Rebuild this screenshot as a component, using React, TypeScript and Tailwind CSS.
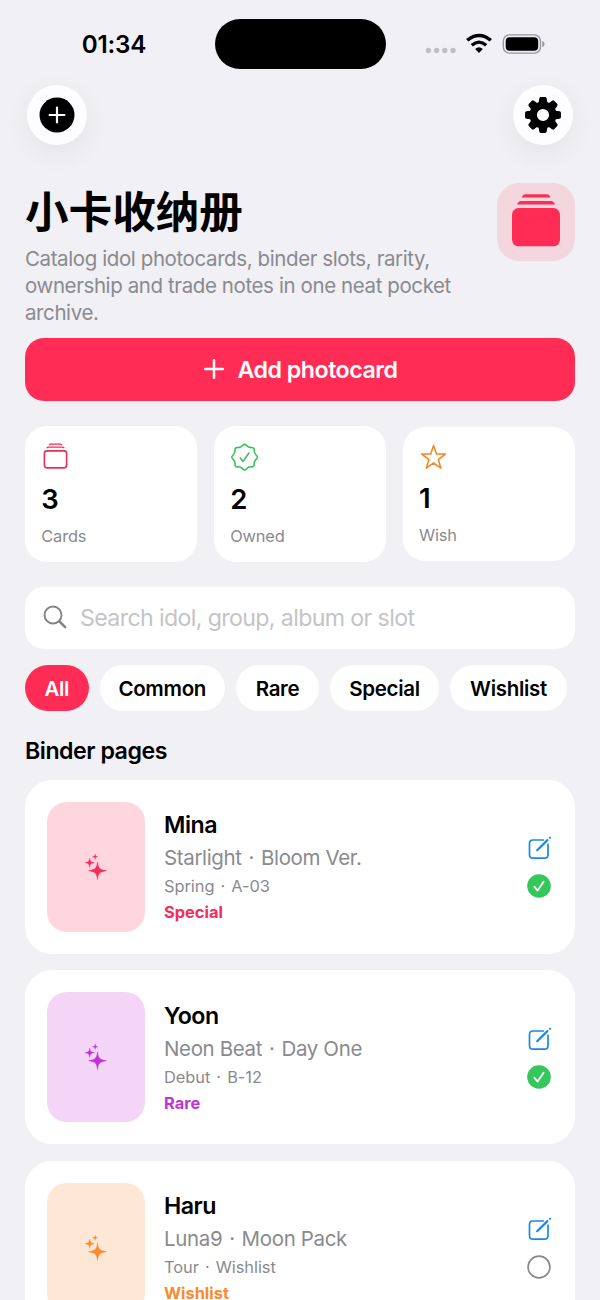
import React from "react";

type CardTone = "pink" | "purple" | "orange";

interface Photocard {
  name: string;
  group: string[];
  slot: string[];
  rarity: string;
  tone: CardTone;
  owned: boolean;
}

const cards: Photocard[] = [
  { name: "Mina", group: ["Starlight", "Bloom Ver."], slot: ["Spring", "A-03"], rarity: "Special", tone: "pink", owned: true },
  { name: "Yoon", group: ["Neon Beat", "Day One"], slot: ["Debut", "B-12"], rarity: "Rare", tone: "purple", owned: true },
  { name: "Haru", group: ["Luna9", "Moon Pack"], slot: ["Tour", "Wishlist"], rarity: "Wishlist", tone: "orange", owned: false },
];

const tones: Record<CardTone, { bg: string; text: string }> = {
  pink: { bg: "bg-[#ffd5de]", text: "text-[#f52d58]" },
  purple: { bg: "bg-[#f4d5f8]", text: "text-[#c233d6]" },
  orange: { bg: "bg-[#ffe7d5]", text: "text-[#fa8a2a]" },
};

const filters = [
  { label: "All", width: "w-[63.5px]" },
  { label: "Common", width: "w-[125.5px]" },
  { label: "Rare", width: "w-[83px]" },
  { label: "Special", width: "w-[109px]" },
  { label: "Wishlist", width: "w-[117px]" },
];

// Closed outline through the midpoints of a 16 point star, so every tip is rounded
const sealPath = (() => {
  const pts = Array.from({ length: 16 }, (_, i) => {
    const r = i % 2 === 0 ? 13.9 : 10.2;
    const a = (i * Math.PI) / 8 - Math.PI / 2;
    return [14 + r * Math.cos(a), 14 + r * Math.sin(a)];
  });
  const mid = (i: number) => {
    const [a, b] = [pts[i % 16], pts[(i + 1) % 16]];
    return `${((a[0] + b[0]) / 2).toFixed(2)} ${((a[1] + b[1]) / 2).toFixed(2)}`;
  };
  let d = `M${mid(15)}`;
  pts.forEach((p, i) => {
    d += `Q${p[0].toFixed(2)} ${p[1].toFixed(2)} ${mid(i)}`;
  });
  return d + "Z";
})();

const PlusCircleIcon = () => (
  <svg width="36" height="36" viewBox="0 0 36 36">
    <circle cx="18" cy="18" r="17.5" fill="#000" />
    <path d="M18 10.6v14.8M10.6 18h14.8" stroke="#fff" strokeWidth="2.2" strokeLinecap="round" />
  </svg>
);

const GearIcon = () => (
  <svg width="36" height="36" viewBox="-18 -18 36 36">
    {[0, 45, 90, 135, 180, 225, 270, 315].map((deg) => (
      <path
        key={deg}
        d="M-4 -11L-3.1 -16.4Q-2.9 -17.3 -2.2 -17.3H2.2Q2.9 -17.3 3.1 -16.4L4 -11Z"
        transform={`rotate(${deg})`}
        stroke="#000"
        strokeWidth="1.2"
        strokeLinejoin="round"
      />
    ))}
    <circle r="9.8" fill="none" stroke="#000" strokeWidth="7.4" />
  </svg>
);

const StackFilledIcon = () => (
  <svg width="48" height="53" viewBox="0 0 48 53" fill="#ff2d55">
    <path d="M9.5 3.6Q11 .3 13.2 .3H35Q37.2 .3 38.5 3.6Z" />
    <path d="M5 10.6Q6.4 7 9 7H39Q41.6 7 43 10.6Z" />
    <rect x="0" y="14" width="48" height="38.3" rx="6.5" />
  </svg>
);

const StackIcon = () => (
  <svg width="28" height="28" viewBox="0 0 28 28" fill="none" stroke="#ee2d57" strokeWidth="1.6">
    <path d="M8.2 2.2Q8.8 1.2 9.8 1.2H19.2Q20.2 1.2 20.8 2.2M5.8 5.2Q6.5 4.2 7.5 4.2H21.5Q22.5 4.2 23.2 5.2" strokeWidth="1.3" />
    <rect x="3.4" y="7.9" width="22.2" height="17" rx="2.6" />
  </svg>
);

const SealIcon = () => (
  <svg width="28" height="28" viewBox="0 0 28 28" fill="none" stroke="#3cc05b" strokeWidth="1.6" strokeLinecap="round" strokeLinejoin="round">
    <g transform="translate(.6 .2)">
      <path d={sealPath} />
      <path d="M9.7 14.8L12.5 18.2L18.3 9.8" />
    </g>
  </svg>
);

const StarIcon = () => (
  <svg width="28" height="28" viewBox="0 0 28 28" fill="none" stroke="#f58a2c" strokeWidth="1.6" strokeLinejoin="round">
    <path d="M14.6 3.5L17.5 11.9L26.5 12.1L19.3 17.5L21.9 26.2L14.6 21L7.3 26.2L9.9 17.5L2.7 12.1L11.7 11.9Z" />
  </svg>
);

const SparklesIcon = () => (
  <svg width="24" height="28" viewBox="0 0 24 28" fill="currentColor">
    <path d="M13.5 9C14.3 15.3 15.7 16.7 22.3 17.7C15.7 18.7 14.3 20.1 13.5 26.5C12.7 20.1 11.3 18.7 4.7 17.7C11.3 16.7 12.7 15.3 13.5 9Z" stroke="currentColor" strokeWidth=".5" />
    <path d="M5.7 5.1C6.2 8.5 6.9 9.2 10.4 9.7C6.9 10.2 6.2 10.9 5.7 14.4C5.2 10.9 4.5 10.2 1 9.7C4.5 9.2 5.2 8.5 5.7 5.1Z" stroke="currentColor" strokeWidth=".4" />
    <path d="M11.2 1C11.5 3 12 3.5 14 3.8C12 4.1 11.5 4.6 11.2 6.6C10.9 4.6 10.4 4.1 8.4 3.8C10.4 3.5 10.9 3 11.2 1Z" stroke="currentColor" strokeWidth=".3" />
  </svg>
);

const EditIcon = () => (
  <svg width="26" height="26" viewBox="0 0 26 26" fill="none" stroke="#1989e6" strokeLinecap="round" strokeLinejoin="round">
    <path d="M17.3 5H6.9Q3.5 5 3.5 8.4V19.8Q3.5 23.2 6.9 23.2H18.6Q22 23.2 22 19.8V9.2" strokeWidth="1.7" />
    <path d="M11.2 15.2L21.4 5.1" strokeWidth="2.2" />
    <path d="M23.9 2.8L24.1 2.6" strokeWidth="2" />
  </svg>
);

const OwnedIcon = ({ owned }: { owned: boolean }) =>
  owned ? (
    <svg width="24" height="24" viewBox="0 0 24 24" fill="none">
      <circle cx="12" cy="12" r="11.8" fill="#34c759" />
      <path d="M7.3 12.7L10.6 16.6L16.6 7.7" stroke="#fff" strokeWidth="1.8" strokeLinecap="round" strokeLinejoin="round" />
    </svg>
  ) : (
    <svg width="24" height="24" viewBox="0 0 24 24" fill="none">
      <circle cx="12" cy="12" r="10.9" stroke="#8a8a8e" strokeWidth="1.7" />
    </svg>
  );

const StatusBar = () => (
  <div className="flex h-[69px] shrink-0 items-end">
    <div className="flex h-[50px] w-[214.5px] items-center justify-center pt-[2px] pl-[13.5px] text-[24.2px] font-semibold tracking-[-0.2px]">
      01:34
    </div>
    <div className="h-[50px] w-[171px] rounded-full bg-black" />
    <div className="flex h-[50px] items-center pl-[39px]">
      <svg width="120" height="24" viewBox="0 0 120 24" fill="none">
        {[3.5, 11.6, 19.8, 28].map((x) => (
          <circle key={x} cx={x} cy="18.5" r="2.7" fill="#bfbfc4" />
        ))}
        <path d="M42.2 8.3Q54 -1.5 65.8 8.3" stroke="#000" strokeWidth="3.4" />
        <path d="M46.8 13.2Q54 7 61.2 13.2" stroke="#000" strokeWidth="3.3" />
        <path d="M50.2 17.1Q54 13.6 57.8 17.1L54 21Z" fill="#000" />
        <rect x="78.3" y="2.9" width="37.2" height="18.2" rx="6" stroke="#97979b" strokeWidth="1.4" />
        <rect x="80.7" y="5.2" width="32.5" height="13.6" rx="4" fill="#000" />
        <path d="M117.3 8.9Q119.6 9.7 119.6 12T117.3 15.1Z" fill="#97979b" />
      </svg>
    </div>
  </div>
);

const Stat = ({ icon, value, label, className }: { icon: React.ReactNode; value: number; label: string; className: string }) => (
  <div className={`flex flex-1 flex-col rounded-[22px] bg-white pl-[16.3px] ${className}`}>
    {icon}
    <div className="mt-[12px] h-[33px] text-[27.5px] leading-[33px] font-semibold">{value}</div>
    <div className="mt-[10px] text-[16.4px] leading-[20px] tracking-[-0.15px] text-[#8a8a8e]">{label}</div>
  </div>
);

const DotJoined = ({ parts }: { parts: string[] }) => (
  <>
    {parts[0]} <span className="mx-[1.5px]">·</span> {parts[1]}
  </>
);

const BinderCard = ({ card }: { card: Photocard }) => {
  const tone = tones[card.tone];
  return (
    <div className="flex h-[173.7px] shrink-0 items-center rounded-[27px] bg-white pr-[23.5px] pl-[22px]">
      <div className={`flex h-[130px] w-[97.5px] items-center justify-center rounded-[20px] ${tone.bg} ${tone.text}`}>
        <SparklesIcon />
      </div>
      <div className="ml-[19.5px] flex-1">
        <h3 className="text-[23.2px] leading-[30px] font-semibold tracking-[-0.5px]">{card.name}</h3>
        <p className="mt-[4px] text-[20.5px] leading-[27px] tracking-[-0.36px] text-[#8a8a8e]">
          <DotJoined parts={card.group} />
        </p>
        <p className="mt-[4px] text-[16.4px] leading-[22px] tracking-[-0.04px] text-[#8a8a8e]">
          <DotJoined parts={card.slot} />
        </p>
        <p className={`mt-[4px] text-[16.4px] leading-[22px] font-bold ${tone.text}`}>{card.rarity}</p>
      </div>
      <div className="flex flex-col items-center gap-[13px]">
        <EditIcon />
        <OwnedIcon owned={card.owned} />
      </div>
    </div>
  );
};

const App = () => {
  return (
    <div className="flex h-[1300px] w-[600px] flex-col overflow-hidden bg-[#f1f0f5] font-['Inter','Noto_Sans_CJK_SC',sans-serif] text-black">
      <StatusBar />

      <div className="mt-[15.5px] flex justify-between pr-[27.5px] pl-[27.4px]">
        <button className="flex h-[60px] w-[60px] items-center justify-center rounded-full bg-[#fdfcff] shadow-[0_8px_28px_rgba(0,0,0,0.06)]">
          <PlusCircleIcon />
        </button>
        <button className="flex h-[60px] w-[60px] items-center justify-center rounded-full bg-[#fdfcff] shadow-[0_8px_28px_rgba(0,0,0,0.06)]">
          <GearIcon />
        </button>
      </div>

      <div className="flex flex-col px-[25px]">
        <div className="mt-[38.4px] flex h-[155px] justify-between">
          <div className="w-[440px]">
            <h1 className="h-[62px] font-['Noto_Sans_CJK_SC',sans-serif] text-[43.6px] leading-[53px] font-bold">小卡收纳册</h1>
            <p className="text-[20.5px] leading-[27px] tracking-[-0.4px] text-[#8a8a8e]">
              Catalog idol photocards, binder slots, rarity,
              <br />
              ownership and trade notes in one neat pocket
              <br />
              archive.
            </p>
          </div>
          <div className="flex h-[78px] w-[78px] items-center justify-center rounded-[22px] bg-[#f4d6df] pb-[3px]">
            <StackFilledIcon />
          </div>
        </div>

        <button className="flex h-[63px] items-center justify-center gap-[14px] rounded-[19px] bg-[#ff2d55] pl-px text-[23.2px] font-semibold tracking-[-0.5px] text-white">
          <svg width="20" height="20" viewBox="0 0 20 20">
            <path d="M10 1.2v17.6M1.2 10h17.6" stroke="#fff" strokeWidth="2.5" strokeLinecap="round" />
          </svg>
          <span className="pt-[2px]">Add photocard</span>
        </button>

        {/* Collection totals */}
        <div className="mt-[25px] flex h-[136px] items-center gap-[16.5px]">
          <Stat icon={<StackIcon />} value={3} label="Cards" className="h-[136px] pt-[17px]" />
          <Stat icon={<SealIcon />} value={2} label="Owned" className="h-[135.5px] pt-[17px]" />
          <Stat icon={<StarIcon />} value={1} label="Wish" className="h-[133.5px] pt-[15px]" />
        </div>

        <div className="mt-[25px] flex h-[62px] items-center rounded-[19px] bg-white pl-[17.5px]">
          <svg width="25" height="25" viewBox="0 0 25 25" fill="none" stroke="#858589" strokeLinecap="round">
            <circle cx="10" cy="10" r="8.5" strokeWidth="1.9" />
            <path d="M16.5 16.5L22.2 22.2" strokeWidth="2.5" />
          </svg>
          <span className="ml-[12.5px] pt-[2px] text-[23.2px] tracking-[-0.64px] text-[#c4c4c6]">Search idol, group, album or slot</span>
        </div>

        <div className="mt-[16.4px] flex gap-[11px]">
          {filters.map((filter, i) => (
            <button
              key={filter.label}
              className={`h-[46px] shrink-0 rounded-full pt-[2px] text-[20.5px] font-semibold tracking-[-0.3px] ${filter.width} ${
                i === 0 ? "bg-[#ff2d55] text-white" : "bg-white text-black"
              }`}
            >
              {filter.label}
            </button>
          ))}
        </div>

        <h2 className="mt-[24.5px] text-[23.2px] leading-[30px] font-semibold tracking-[-0.48px]">Binder pages</h2>

        <div className="mt-[14.2px] flex flex-col gap-[16.7px]">
          {cards.map((card) => (
            <BinderCard key={card.name} card={card} />
          ))}
        </div>
      </div>
    </div>
  );
};

export default App;
